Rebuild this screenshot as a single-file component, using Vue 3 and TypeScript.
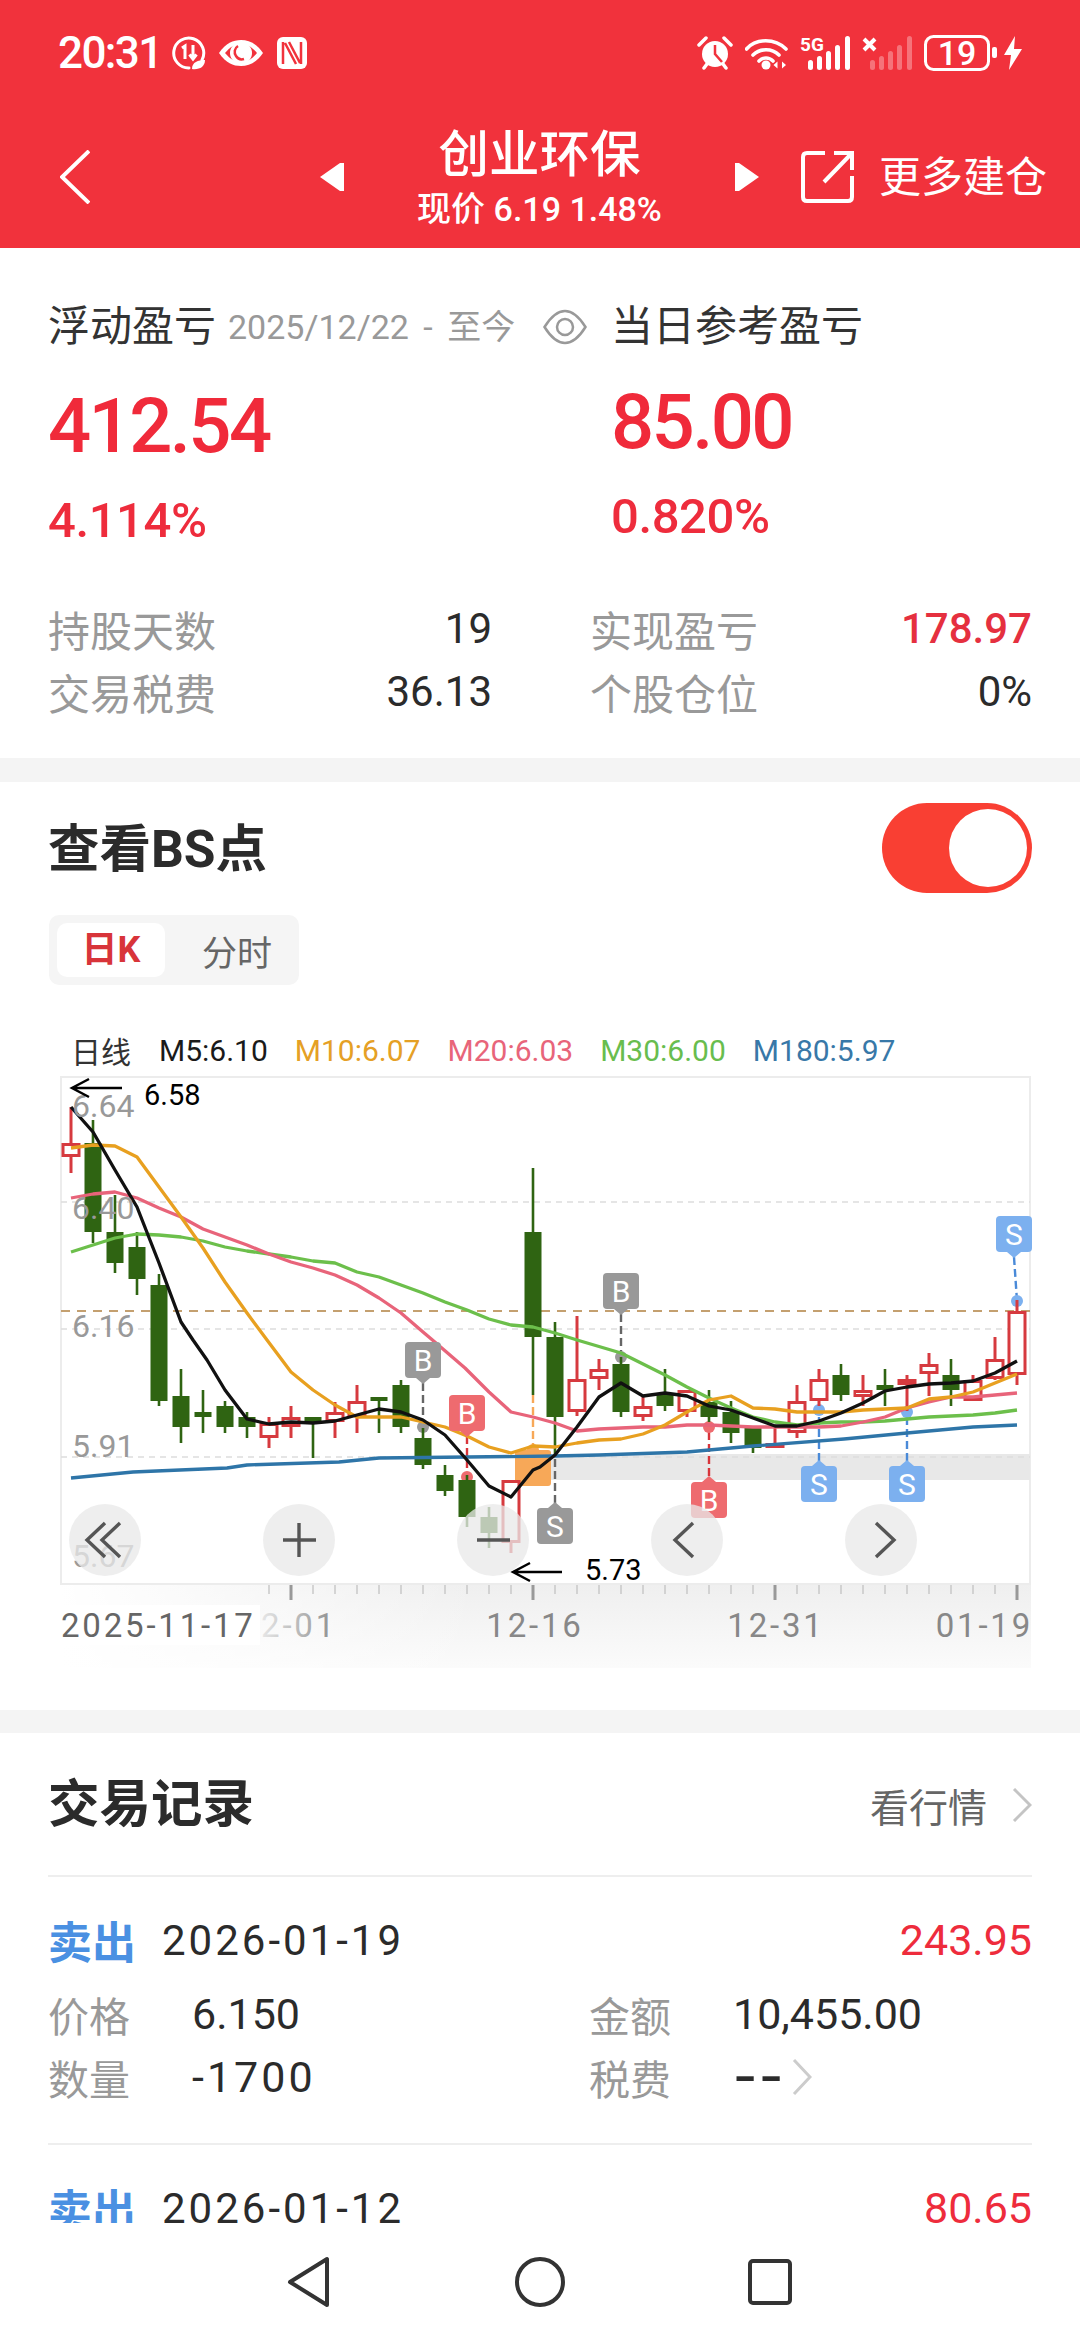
<script setup lang="ts">
type Candle = [string, number, number, number, number]

const rawCandles: Candle[] = [
  ['r', 1107, 1143, 1157, 1173], ['g', 1120, 1143, 1232, 1243], ['g', 1195, 1232, 1263, 1273],
  ['g', 1232, 1247, 1279, 1295], ['g', 1274, 1285, 1401, 1406], ['g', 1369, 1396, 1427, 1443],
  ['g', 1390, 1412, 1417, 1433], ['g', 1401, 1406, 1427, 1433], ['g', 1412, 1417, 1427, 1438],
  ['r', 1417, 1423, 1438, 1448], ['r', 1406, 1417, 1427, 1438], ['g', 1417, 1417, 1422, 1458],
  ['r', 1402, 1412, 1422, 1438], ['r', 1385, 1401, 1417, 1433], ['g', 1397, 1397, 1401, 1433],
  ['g', 1380, 1385, 1427, 1433], ['g', 1428, 1438, 1465, 1469], ['g', 1465, 1475, 1491, 1496],
  ['g', 1475, 1480, 1517, 1527], ['g', 1507, 1517, 1533, 1548], ['r', 1480, 1480, 1543, 1553],
  ['g', 1168, 1232, 1337, 1395], ['g', 1322, 1337, 1417, 1455], ['r', 1316, 1379, 1412, 1416],
  ['r', 1359, 1369, 1379, 1390], ['g', 1357, 1364, 1412, 1417], ['r', 1395, 1406, 1417, 1421],
  ['g', 1369, 1395, 1406, 1411], ['r', 1390, 1390, 1412, 1417], ['g', 1390, 1402, 1417, 1422],
  ['g', 1401, 1412, 1433, 1443], ['g', 1427, 1428, 1448, 1453], ['r', 1427, 1443, 1448, 1448],
  ['r', 1385, 1401, 1433, 1438], ['r', 1369, 1379, 1401, 1406], ['g', 1364, 1375, 1395, 1401],
  ['r', 1375, 1390, 1397, 1406], ['g', 1369, 1385, 1390, 1406], ['r', 1375, 1379, 1385, 1411],
  ['r', 1353, 1364, 1374, 1396], ['g', 1359, 1375, 1390, 1406], ['r', 1375, 1380, 1401, 1401],
  ['r', 1337, 1359, 1379, 1380], ['r', 1300, 1311, 1375, 1385]
]
const candles = rawCandles.map((c, i) => ({
  x: 71 + 22 * i,
  up: c[0] === 'r',
  high: c[1],
  top: c[2],
  bottom: c[3],
  low: c[4]
}))

const lines = [
  {
    color: '#2E75A8',
    points: '71,1478 133,1472 227,1468 247,1465 339,1462 379,1458 467,1457 555,1456 599,1455 687,1452 753,1446 844,1439 907,1433 973,1427 1017,1425'
  },
  {
    color: '#6CBF4B',
    points: '71,1252 93,1245 115,1238 137,1234 159,1235 181,1237 203,1241 225,1247 247,1251 269,1254 291,1257 313,1261 335,1263 357,1272 379,1277 401,1285 423,1293 445,1302 467,1310 489,1319 511,1325 533,1327 555,1333 577,1340 621,1353 665,1375 687,1387 709,1398 731,1408 753,1417 775,1422 797,1425 819,1423 841,1422 863,1422 885,1421 907,1419 929,1417 951,1416 973,1415 995,1413 1017,1410'
  },
  {
    color: '#E8647A',
    points: '71,1198 93,1194 115,1192 137,1198 159,1208 181,1217 203,1229 225,1237 247,1245 269,1254 291,1262 313,1268 335,1275 357,1285 379,1298 401,1313 423,1332 436,1343 465,1368 489,1392 511,1412 533,1417 555,1423 577,1431 599,1429 621,1428 643,1427 665,1427 687,1425 709,1425 731,1426 753,1427 775,1427 797,1427 819,1427 841,1426 863,1422 885,1417 907,1408 929,1402 951,1397 973,1397 995,1395 1017,1393'
  },
  {
    color: '#E8A020',
    points: '71,1148 93,1145 115,1146 137,1157 159,1187 181,1217 203,1248 225,1282 247,1313 267,1340 291,1372 313,1390 335,1405 357,1417 379,1417 401,1417 423,1422 445,1427 467,1436 489,1447 511,1453 533,1446 555,1447 577,1443 599,1440 621,1439 643,1434 665,1425 687,1412 709,1400 731,1396 753,1408 775,1409 797,1412 819,1412 841,1412 863,1410 885,1409 907,1408 929,1399 951,1397 973,1392 995,1383 1017,1374'
  },
  {
    color: '#111111',
    points: '71,1107 93,1132 115,1170 137,1207 159,1263 181,1322 193,1340 207,1360 225,1390 247,1419 269,1424 291,1422 313,1423 335,1421 357,1415 379,1409 401,1412 423,1420 445,1435 467,1460 489,1486 511,1497 533,1470 540,1467 555,1455 577,1427 599,1397 621,1383 643,1396 665,1393 687,1396 709,1406 731,1410 753,1418 775,1426 797,1426 819,1421 841,1413 863,1403 885,1391 907,1387 929,1384 951,1383 973,1381 995,1373 1017,1361'
  }
]

const legend = [
  { text: 'M5:6.10', cls: 'l-black' },
  { text: 'M10:6.07', cls: 'l-orange' },
  { text: 'M20:6.03', cls: 'l-pink' },
  { text: 'M30:6.00', cls: 'l-green' },
  { text: 'M180:5.97', cls: 'l-blue' }
]

const yLabels = [
  { t: '6.64', y: 1117 },
  { t: '6.40', y: 1219 },
  { t: '6.16', y: 1337 },
  { t: '5.91', y: 1457 },
  { t: '5.67', y: 1567 }
]

const leaders = [
  { x1: 423, y1: 1383, x2: 423, y2: 1427, c: '#666666', dot: '#999999' },
  { x1: 467, y1: 1436, x2: 467, y2: 1477, c: '#D8343A', dot: '#EE6B6F' },
  { x1: 621, y1: 1314, x2: 621, y2: 1357, c: '#666666', dot: '#999999' },
  { x1: 533, y1: 1395, x2: 533, y2: 1450, c: '#F7A858', dot: '#F7A858' },
  { x1: 555, y1: 1503, x2: 555, y2: 1455, c: '#666666', dot: '' },
  { x1: 709, y1: 1476, x2: 709, y2: 1427, c: '#D8343A', dot: '#EE6B6F' },
  { x1: 819, y1: 1461, x2: 819, y2: 1410, c: '#4A8AD8', dot: '#7CB0EF' },
  { x1: 907, y1: 1461, x2: 907, y2: 1412, c: '#4A8AD8', dot: '#7CB0EF' },
  { x1: 1014, y1: 1257, x2: 1017, y2: 1301, c: '#4A8AD8', dot: '#7CB0EF' }
]

const pins = [
  { x: 423, top: 1342, down: true, c: '#999999', t: 'B' },
  { x: 467, top: 1395, down: true, c: '#EE6B6F', t: 'B' },
  { x: 621, top: 1273, down: true, c: '#999999', t: 'B' },
  { x: 555, top: 1508, down: false, c: '#999999', t: 'S' },
  { x: 709, top: 1482, down: false, c: '#EE6B6F', t: 'B' },
  { x: 819, top: 1466, down: false, c: '#7CB0EF', t: 'S' },
  { x: 907, top: 1466, down: false, c: '#7CB0EF', t: 'S' },
  { x: 1014, top: 1216, down: true, c: '#7CB0EF', t: 'S' }
]

function pinTip(p: { x: number; top: number; down: boolean }): string {
  return p.down
    ? `${p.x - 7},${p.top + 36} ${p.x + 7},${p.top + 36} ${p.x},${p.top + 42}`
    : `${p.x - 7},${p.top} ${p.x + 7},${p.top} ${p.x},${p.top - 6}`
}

const ticks = Array.from({ length: 35 }, (_, i) => {
  const x = 269 + 22 * i
  return { x, big: [291, 533, 775, 1017].includes(x) }
})

const buttons = [105, 299, 493, 687, 881]

const bars = [
  { x: 0, h: 10 },
  { x: 9, h: 14 },
  { x: 18, h: 19 },
  { x: 27, h: 25 },
  { x: 37, h: 34 }
]

const stats = [
  { k: '持股天数', v: '19', red: false },
  { k: '实现盈亏', v: '178.97', red: true },
  { k: '交易税费', v: '36.13', red: false },
  { k: '个股仓位', v: '0%', red: false }
]
</script>

<template>
  <div class="page">
    <header class="header">
      <div class="status">
        <span class="time">20:31</span>
        <svg class="s-a" width="34" height="34" viewBox="0 0 34 34">
          <path d="M30 24 A15 15 0 1 0 17 32" fill="none" stroke="#fff" stroke-width="3" stroke-linecap="round" />
          <path d="M10 12 L13 10 V23 M21 9 V22 M17.5 18.5 L21 23 L24.5 18.5" fill="none" stroke="#fff" stroke-width="3" />
          <path d="M20 33 C20 26 26 24 33 24 C33 31 27 34 20 33 Z" fill="#fff" />
        </svg>
        <svg class="s-b" width="46" height="28" viewBox="0 0 46 28">
          <path d="M1 14 C8 4 15 1 23 1 C31 1 38 4 45 14 C38 24 31 27 23 27 C15 27 8 24 1 14 Z" fill="#fff" />
          <path d="M7 14 C12 8 17 5 23 5 C29 5 34 8 39 14 C34 20 29 23 23 23 C17 23 12 20 7 14 Z" fill="#F1323C" />
          <circle cx="23" cy="14" r="11" fill="#fff" />
          <path d="M20 7 A7 7 0 0 0 18 17 A7 7 0 0 0 26 20" fill="none" stroke="#F1323C" stroke-width="2.5" />
        </svg>
        <svg class="s-c" width="30" height="32" viewBox="0 0 30 32">
          <rect width="30" height="32" rx="6" fill="#fff" />
          <path d="M6 5 V27 M24 5 V27 M8 6 L19 27 M12 5 L23 26" fill="none" stroke="#F1323C" stroke-width="2.5" />
        </svg>
        <div class="status-right">
          <svg width="36" height="34" viewBox="0 0 36 34">
            <circle cx="18" cy="18" r="13" fill="#fff" />
            <path d="M18 9 V18 L25 26" fill="none" stroke="#F1323C" stroke-width="2.5" />
            <path d="M2 9 L9 2 M34 9 L27 2 M7 32 L10 28 M29 32 L26 28" stroke="#fff" stroke-width="3.5" stroke-linecap="round" />
          </svg>
          <svg class="s-d" width="44" height="33" viewBox="0 0 44 33">
            <path d="M1.5 12 C11 1 30 1 41 12 M8 18 C15 11 27 11 34 18 M14 24 C18 20 24 20 28 24" fill="none" stroke="#fff" stroke-width="3.6" stroke-linecap="round" />
            <circle cx="21" cy="28" r="4.5" fill="#fff" />
            <path d="M32.5 24.5 L28.5 28 L32.5 31.5 Z M37 24.5 L41 28 L37 31.5 Z" fill="#fff" />
          </svg>
          <svg class="s-e" width="50" height="34" viewBox="0 0 50 34">
            <text x="0" y="15" class="five-g">5G</text>
            <rect v-for="b in bars" :key="b.x" :x="b.x + 8" :y="34 - b.h" width="5" :height="b.h" rx="2.5" fill="#fff" />
          </svg>
          <svg class="s-f" width="50" height="34" viewBox="0 0 50 34">
            <path d="M2 3 L13 14 M13 3 L2 14" stroke="#fff" stroke-width="4" />
            <rect v-for="b in bars" :key="b.x" :x="b.x + 8" :y="34 - b.h" width="5" :height="b.h" rx="2.5" fill="#fff" fill-opacity=".32" />
          </svg>
          <svg class="s-g" width="74" height="36" viewBox="0 0 74 36">
            <rect x="1.5" y="1.5" width="63" height="33" rx="8" fill="none" stroke="#fff" stroke-width="3" />
            <text x="33" y="30" class="batt">19</text>
            <rect x="68" y="12" width="5" height="11" rx="2" fill="#fff" />
          </svg>
          <svg class="s-h" width="18" height="34" viewBox="0 0 18 34">
            <path d="M11 0 L0 19 H7 L5 34 L18 13 H10 Z" fill="#fff" />
          </svg>
        </div>
      </div>
      <div class="nav">
        <svg class="back" width="30" height="54" viewBox="0 0 30 54">
          <path d="M29 1 L2 27 L29 53" fill="none" stroke="#fff" stroke-width="4" />
        </svg>
        <svg class="tri-l" width="24" height="30" viewBox="0 0 24 30">
          <path d="M24 1 V29 L20 29 L0 15 L20 1 Z" fill="#fff" />
        </svg>
        <div class="title-box">
          <div class="title">创业环保</div>
          <div class="sub">现价 6.19 1.48%</div>
        </div>
        <svg width="24" height="30" viewBox="0 0 24 30">
          <path d="M0 1 V29 L4 29 L24 15 L4 1 Z" fill="#fff" />
        </svg>
        <svg class="share" width="54" height="54" viewBox="0 0 54 54">
          <path d="M24 3 H6 Q2 3 2 7 V47 Q2 51 6 51 H47 Q51 51 51 47 V26 M23 32 L51 3 M33 3 H51 V20" fill="none" stroke="#fff" stroke-width="4" />
        </svg>
        <span class="more">更多建仓</span>
      </div>
    </header>

    <section class="summary">
      <div class="sum-grid">
        <div class="sum-col">
          <div class="head-l">
            <span class="cap">浮动盈亏</span>
            <span class="range">2025/12/22 - 至今</span>
            <svg class="eye" width="44" height="36" viewBox="0 0 44 36">
              <path d="M1.5 18 C9 6 16 2 22 2 C28 2 35 6 42.5 18 C35 30 28 34 22 34 C16 34 9 30 1.5 18 Z" fill="none" stroke="#999" stroke-width="2.5" />
              <circle cx="22" cy="18" r="8" fill="none" stroke="#999" stroke-width="2.5" />
            </svg>
          </div>
          <div class="big big-l">412.54</div>
          <div class="pct pct-l">4.114%</div>
        </div>
        <div class="sum-col">
          <div class="head-r"><span class="cap">当日参考盈亏</span></div>
          <div class="big">85.00</div>
          <div class="pct">0.820%</div>
        </div>
      </div>
      <div class="stats">
        <div v-for="s in stats" :key="s.k" class="stat">
          <span class="stat-k">{{ s.k }}</span>
          <span class="stat-v" :class="{ red: s.red }">{{ s.v }}</span>
        </div>
      </div>
    </section>

    <section class="bs">
      <div class="bs-head">
        <h2 class="h2">查看BS点</h2>
        <div class="toggle"><span class="knob"></span></div>
      </div>
      <div class="seg">
        <span class="seg-on">日K</span>
        <span class="seg-off">分时</span>
      </div>
      <div class="legend">
        <span class="l-day">日线</span>
        <span v-for="l in legend" :key="l.text" :class="l.cls">{{ l.text }}</span>
      </div>
      <svg class="chart" width="1080" height="642" viewBox="0 1068 1080 642">
        <defs>
          <linearGradient id="axisBg" x1="0" y1="0" x2="0" y2="1">
            <stop offset="0" stop-color="#efefef" />
            <stop offset="1" stop-color="#fbfbfb" />
          </linearGradient>
          <linearGradient id="axisFade" x1="0" y1="0" x2="1" y2="0">
            <stop offset="0" stop-color="#ffffff" />
            <stop offset="1" stop-color="#ffffff" stop-opacity="0" />
          </linearGradient>
          <linearGradient id="label" gradientUnits="userSpaceOnUse" x1="255" y1="0" x2="340" y2="0">
            <stop offset="0" stop-color="#eeeeee" />
            <stop offset="1" stop-color="#888888" />
          </linearGradient>
        </defs>

        <rect x="60" y="1585" width="971" height="83" fill="url(#axisBg)" />
        <rect x="60" y="1585" width="420" height="83" fill="url(#axisFade)" />

        <rect x="61" y="1077" width="969" height="507" fill="#fff" stroke="#ececec" stroke-width="2" />
        <rect x="551" y="1454" width="479" height="26" fill="#e8e8e8" />
        <path d="M61 1202 H1030 M61 1329 H1030 M61 1457 H1030" stroke="#dddddd" stroke-width="1.5" stroke-dasharray="6 5" fill="none" />
        <path d="M61 1311 H1030" stroke="#C4A070" stroke-width="2" stroke-dasharray="9 7" fill="none" />
        <rect x="515" y="1450" width="36" height="36" rx="3" fill="#F7A858" />

        <g v-for="(l, i) in leaders" :key="'lead' + i">
          <line :x1="l.x1" :y1="l.y1" :x2="l.x2" :y2="l.y2" :stroke="l.c" stroke-width="2.4" stroke-dasharray="8 4" />
          <circle v-if="l.dot" :cx="l.x2" :cy="l.y2" r="6" :fill="l.dot" />
        </g>

        <g v-for="c in candles" :key="c.x">
          <template v-if="c.up">
            <line :x1="c.x" :y1="c.high" :x2="c.x" :y2="c.top" stroke="#D63A3F" stroke-width="3" />
            <line :x1="c.x" :y1="c.bottom" :x2="c.x" :y2="c.low" stroke="#D63A3F" stroke-width="3" />
            <rect :x="c.x - 8" :y="c.top + 1.5" width="16" :height="Math.max(c.bottom - c.top - 3, 1)" fill="#fff" stroke="#D63A3F" stroke-width="3" />
          </template>
          <template v-else>
            <line :x1="c.x" :y1="c.high" :x2="c.x" :y2="c.low" stroke="#2F6412" stroke-width="2.6" />
            <rect :x="c.x - 8.5" :y="c.top" width="17" :height="c.bottom - c.top" fill="#2F6412" />
          </template>
        </g>

        <polyline v-for="l in lines" :key="l.color" :points="l.points" fill="none" :stroke="l.color" stroke-width="3.3" stroke-linejoin="round" />

        <text v-for="l in yLabels" :key="l.t" x="72" :y="l.y" class="y-label">{{ l.t }}</text>

        <path d="M122 1088 H72 M89 1079 L72 1088 L89 1097" fill="none" stroke="#000" stroke-width="2.5" />
        <text x="144" y="1105" class="val">6.58</text>
        <path d="M562 1572 H513 M530 1563 L513 1572 L530 1581" fill="none" stroke="#000" stroke-width="2.5" />
        <text x="585" y="1580" class="val">5.73</text>

        <g v-for="p in pins" :key="p.x + p.t">
          <rect :x="p.x - 18" :y="p.top" width="36" height="36" rx="4" :fill="p.c" />
          <polygon :points="pinTip(p)" :fill="p.c" />
          <text :x="p.x" :y="p.top + 29" class="pin">{{ p.t }}</text>
        </g>

        <g v-for="b in buttons" :key="b">
          <circle :cx="b" cy="1540" r="36" fill="rgba(232,232,232,.76)" />
        </g>
        <path d="M105 1523 L87 1540 L105 1557 M120 1523 L102 1540 L120 1557" fill="none" stroke="#555" stroke-width="3.4" />
        <path d="M283 1540 H316 M299 1523 V1557" fill="none" stroke="#555" stroke-width="3.4" />
        <path d="M477 1540 H510" fill="none" stroke="#555" stroke-width="3.4" />
        <path d="M693 1523 L675 1540 L693 1557" fill="none" stroke="#555" stroke-width="3.4" />
        <path d="M876 1523 L894 1540 L876 1557" fill="none" stroke="#555" stroke-width="3.4" />

        <g v-for="t in ticks" :key="t.x">
          <line :x1="t.x" y1="1585" :x2="t.x" :y2="t.big ? 1600 : 1594" :stroke="t.big ? '#999999' : '#c8c8c8'" :stroke-width="t.big ? 3 : 1.5" />
        </g>

        <text x="337" y="1637" text-anchor="end" class="axis" fill="url(#label)">12-01</text>
        <rect x="60" y="1605" width="200" height="40" fill="#fff" />
        <text x="61" y="1637" class="axis axis-dark">2025-11-17</text>
        <text x="535" y="1637" text-anchor="middle" class="axis axis-gray">12-16</text>
        <text x="776" y="1637" text-anchor="middle" class="axis axis-gray">12-31</text>
        <text x="1033" y="1637" text-anchor="end" class="axis axis-gray">01-19</text>
      </svg>
    </section>

    <section class="records">
      <div class="rec-head">
        <h2 class="h2">交易记录</h2>
        <div class="rec-link">
          <span>看行情</span>
          <svg width="20" height="34" viewBox="0 0 20 34">
            <path d="M2 1 L18 17 L2 33" fill="none" stroke="#c4c4c4" stroke-width="3" />
          </svg>
        </div>
      </div>

      <article class="trade">
        <div class="trade-top">
          <span class="sell">卖出</span>
          <span class="date">2026-01-19</span>
          <span class="amount">243.95</span>
        </div>
        <div class="trade-grid">
          <div class="cell"><span class="k">价格</span><span class="v">6.150</span></div>
          <div class="cell"><span class="k">金额</span><span class="v">10,455.00</span></div>
          <div class="cell"><span class="k">数量</span><span class="v v-neg">-1700</span></div>
          <div class="cell">
            <span class="k">税费</span><span class="v v-dash">--</span>
            <svg class="tax-arrow" width="20" height="36" viewBox="0 0 20 36">
              <path d="M2 1 L18 18 L2 35" fill="none" stroke="#cccccc" stroke-width="3" />
            </svg>
          </div>
        </div>
      </article>

      <article class="trade">
        <div class="trade-top">
          <span class="sell">卖出</span>
          <span class="date">2026-01-12</span>
          <span class="amount">80.65</span>
        </div>
      </article>
    </section>

    <nav class="sys-nav">
      <svg width="44" height="52" viewBox="0 0 44 52">
        <path d="M40 3 V49 L3 26 Z" fill="none" stroke="#333" stroke-width="4" stroke-linejoin="round" />
      </svg>
      <svg class="nav-o" width="50" height="50" viewBox="0 0 50 50">
        <circle cx="25" cy="25" r="23" fill="none" stroke="#333" stroke-width="4" />
      </svg>
      <svg class="nav-s" width="44" height="46" viewBox="0 0 44 46">
        <rect x="2" y="2" width="40" height="42" rx="3" fill="none" stroke="#333" stroke-width="4" />
      </svg>
    </nav>
  </div>
</template>

<style scoped>
.page {
  position: relative;
  width: 1080px;
  height: 2340px;
  overflow: hidden;
  background: #fff;
  color: #333;
  font-family: Roboto, "Noto Sans CJK SC", sans-serif;
}
.header {
  height: 248px;
  background: #f1323c;
  color: #fff;
}
.status {
  display: flex;
  align-items: center;
  height: 106px;
  padding: 0 58px;
}
.time {
  width: 100px;
  font-size: 44px;
  font-weight: 500;
  letter-spacing: -1.6px;
  line-height: 1;
  white-space: nowrap;
}
.status svg {
  display: block;
  flex: none;
}
.s-a { margin-left: 14px; }
.s-b { margin-left: 12px; }
.s-c { margin-left: 13px; }
.status-right {
  display: flex;
  align-items: center;
  margin-left: auto;
}
.s-d { margin-left: 12px; }
.s-e { margin-left: 11px; }
.s-f { margin-left: 12px; }
.s-g { margin-left: 12px; }
.s-h { margin-left: 6px; }
.five-g {
  font-family: Roboto, sans-serif;
  font-size: 19px;
  font-weight: 700;
  fill: #fff;
}
.batt {
  font-family: Roboto, sans-serif;
  font-size: 34px;
  font-weight: 500;
  fill: #fff;
  text-anchor: middle;
}
.nav {
  display: flex;
  align-items: center;
  height: 142px;
  padding-left: 60px;
}
.tri-l { margin-left: 230px; }
.title-box {
  width: 391px;
  padding-top: 6px;
  text-align: center;
}
.title {
  font-size: 50.5px;
  font-weight: 500;
  line-height: 58px;
  margin-top: -4px;
}
.sub {
  font-size: 34px;
  font-weight: 500;
  line-height: 42px;
  margin-top: 4px;
  white-space: nowrap;
}
.share { margin-left: 42px; }
.more {
  margin-left: 24px;
  margin-top: 2px;
  font-size: 42px;
  line-height: 1;
  white-space: nowrap;
}

.summary {
  height: 510px;
  padding: 55px 48px 0;
  box-sizing: border-box;
}
.sum-grid {
  display: grid;
  grid-template-columns: 563px 1fr;
}
.head-l {
  display: flex;
  align-items: center;
  height: 48px;
  padding-right: 24px;
}
.head-r {
  display: flex;
  align-items: center;
  height: 48px;
}
.cap {
  font-size: 42px;
  color: #333;
  line-height: 1;
}
.range {
  margin-left: 12px;
  font-size: 34px;
  word-spacing: 6px;
  color: #999;
  line-height: 1;
  white-space: nowrap;
}
.eye { margin-left: auto; display: block; }
.big {
  margin-top: 33px;
  height: 76px;
  line-height: 76px;
  font-size: 76px;
  font-weight: 500;
  letter-spacing: -2.6px;
  color: #f02a3a;
}
.big-l { margin-top: 37px; }
.pct {
  margin-top: 32px;
  height: 50px;
  line-height: 50px;
  font-size: 49px;
  font-weight: 500;
  color: #ee2c3c;
  letter-spacing: -.4px;
}
.stats {
  display: grid;
  grid-template-columns: 444px 442px;
  column-gap: 98px;
  grid-auto-rows: 63px;
  margin-top: 51px;
}
.stat {
  display: flex;
  align-items: center;
  justify-content: space-between;
}
.stat-k {
  font-size: 42px;
  color: #999;
}
.stat-v {
  font-size: 42px;
  color: #2b2b2b;
}
.stat-v.red {
  color: #e5303f;
  font-weight: 500;
}

.bs {
  height: 928px;
  border-top: 24px solid #f4f4f4;
}
.bs-head {
  display: flex;
  align-items: center;
  justify-content: space-between;
  height: 90px;
  padding: 21px 48px 0;
}
.bs-head .h2 { margin-top: 4px; }
.h2 {
  margin: 0;
  font-size: 51.5px;
  font-weight: 700;
  color: #2b2b2b;
  line-height: 1;
}
.toggle {
  display: flex;
  align-items: center;
  justify-content: flex-end;
  width: 150px;
  height: 90px;
  padding-right: 5px;
  box-sizing: border-box;
  background: #f93f33;
  border-radius: 45px;
}
.knob {
  width: 78px;
  height: 78px;
  border-radius: 50%;
  background: #fff;
}
.seg {
  display: flex;
  align-items: center;
  width: 250px;
  height: 70px;
  margin: 22px 0 0 49px;
  padding-left: 8px;
  box-sizing: border-box;
  background: #f5f5f5;
  border-radius: 10px;
}
.seg-on {
  width: 108px;
  height: 54px;
  line-height: 54px;
  text-align: center;
  background: #fff;
  border-radius: 10px;
  font-size: 36px;
  font-weight: 700;
  color: #d8343a;
}
.seg-off {
  margin-left: 37px;
  font-size: 35px;
  color: #666;
}
.legend {
  display: flex;
  align-items: center;
  gap: 27px;
  height: 36px;
  margin-top: 47px;
  padding-left: 71px;
  font-size: 30px;
  white-space: nowrap;
}
.l-day { color: #333; margin-right: 1px; }
.l-black { color: #1a1a1a; }
.l-orange { color: #e5a025; }
.l-pink { color: #e8657a; }
.l-green { color: #68bd4e; }
.l-blue { color: #3878a8; }
.chart { display: block; }
.y-label {
  font-size: 32px;
  fill: #999;
}
.val {
  font-size: 29px;
  fill: #000;
}
.pin {
  font-size: 30px;
  fill: #fff;
  text-anchor: middle;
}
.axis {
  font-size: 33px;
  letter-spacing: 2.8px;
}
.axis-dark { fill: #666; }
.axis-gray { fill: #888; }

.records {
  border-top: 23px solid #f4f4f4;
  padding: 0 48px;
}
.rec-head {
  display: flex;
  align-items: center;
  justify-content: space-between;
  height: 142px;
  padding-top: 2px;
  box-sizing: border-box;
}
.rec-link {
  display: flex;
  align-items: center;
  gap: 25px;
  font-size: 39px;
  color: #666;
}
.rec-link svg { display: block; }
.trade {
  border-top: 2px solid #eeeeee;
  padding: 41px 0 35px;
}
.trade-top {
  display: flex;
  align-items: center;
  height: 44px;
}
.sell {
  width: 114px;
  font-size: 44px;
  font-weight: 700;
  color: #4a90e2;
}
.date {
  font-size: 42px;
  color: #2b2b2b;
  letter-spacing: 3px;
}
.amount {
  margin-left: auto;
  font-size: 43px;
  color: #ee2c3c;
}
.trade-grid {
  display: grid;
  grid-template-columns: 541px 1fr;
  grid-auto-rows: 63px;
  margin-top: 20px;
}
.cell {
  display: flex;
  align-items: center;
}
.k {
  width: 144px;
  font-size: 41px;
  color: #999;
}
.v {
  font-size: 43px;
  color: #2b2b2b;
}
.v-neg { letter-spacing: 3px; }
.v-dash {
  display: inline-block;
  width: 49px;
  font-weight: 700;
  letter-spacing: 1px;
  transform: scaleX(1.45);
  transform-origin: left center;
}
.tax-arrow { display: block; margin-left: 10px; }

.sys-nav {
  position: absolute;
  left: 0;
  right: 0;
  bottom: 0;
  display: flex;
  align-items: center;
  height: 117px;
  padding-left: 287px;
  background: #fff;
}
.sys-nav svg { display: block; flex: none; }
.nav-o { margin-left: 184px; }
.nav-s { margin-left: 183px; }
</style>
